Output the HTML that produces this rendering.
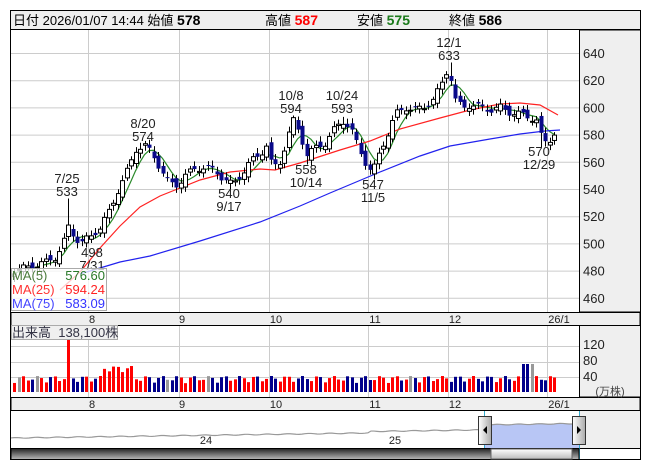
<!DOCTYPE html>
<html><head><meta charset="utf-8"><style>
body{margin:0;background:#fff;width:653px;height:470px;overflow:hidden;font-family:"Liberation Sans","Noto Sans CJK JP",sans-serif}
svg{position:absolute;left:0;top:0}
text{font-family:"Liberation Sans","Noto Sans CJK JP",sans-serif}
</style></head><body>
<svg id="s" width="653" height="470" xmlns="http://www.w3.org/2000/svg">
<rect x="10.5" y="10.5" width="630" height="449" fill="#fff" stroke="#000"/>
<rect x="11" y="11" width="629" height="18" fill="#efefef"/>
<line x1="10" y1="29.5" x2="641" y2="29.5" stroke="#000"/>
<rect x="579.5" y="30" width="61" height="282" fill="#efefef" stroke="#000"/>
<rect x="579.5" y="325" width="61" height="72" fill="#efefef" stroke="#000"/>
<rect x="11" y="312.5" width="629" height="13" fill="#efefef" stroke="#000"/>
<rect x="11" y="397.5" width="629" height="13" fill="#efefef" stroke="#000"/>
<rect x="579.5" y="410.5" width="61" height="38" fill="#efefef" stroke="#000"/>
<g id="grid" stroke="#ccc" stroke-width="1"></g>
<g id="nav"></g>
<g id="c"></g>
<g font-size="13">
<text x="13" y="25">日付 2026/01/07 14:44 始値 <tspan font-weight="bold" font-size="14">578</tspan></text>
<text x="265" y="25">高値 <tspan font-weight="bold" font-size="14" fill="#f00">587</tspan></text>
<text x="357" y="25">安値 <tspan font-weight="bold" font-size="14" fill="#1a7a1a">575</tspan></text>
<text x="449" y="25">終値 <tspan font-weight="bold" font-size="14">586</tspan></text>
</g>
<g font-size="13" fill="#222" id="yl"></g>
<g font-size="13" fill="#222" text-anchor="middle">
<text x="67" y="183">7/25</text><text x="67" y="196">533</text>
<text x="143" y="128">8/20</text><text x="143" y="141">574</text>
<text x="92" y="257">498</text><text x="92" y="270">7/31</text>
<text x="229" y="198">540</text><text x="229" y="211">9/17</text>
<text x="291" y="100">10/8</text><text x="291" y="113">594</text>
<text x="306" y="174">558</text><text x="306" y="187">10/14</text>
<text x="342" y="100">10/24</text><text x="342" y="113">593</text>
<text x="373" y="189">547</text><text x="373" y="202">11/5</text>
<text x="449" y="47">12/1</text><text x="449" y="60">633</text>
<text x="539" y="156">570</text><text x="539" y="169">12/29</text>
</g>
<g font-size="11" fill="#222" text-anchor="middle">
<text x="92" y="323">8</text><text x="182" y="323">9</text><text x="276" y="323">10</text><text x="375" y="323">11</text><text x="455" y="323">12</text><text x="559" y="323">26/1</text>
<text x="92" y="408">8</text><text x="182" y="408">9</text><text x="276" y="408">10</text><text x="375" y="408">11</text><text x="455" y="408">12</text><text x="559" y="408">26/1</text>
<text x="206" y="444">24</text><text x="395" y="444">25</text>
</g>
<g font-size="13" fill="#222">
<text x="583" y="349">120</text><text x="583" y="365">80</text><text x="583" y="381">40</text>
</g>
<text x="610" y="395" font-size="11" fill="#444" text-anchor="middle">(万株)</text>
<rect x="11.5" y="268.5" width="95" height="42" fill="#fff" fill-opacity="0.75" stroke="#aaa"/>
<g font-size="13">
<text x="12" y="280" fill="#4a7a3a">MA(5)</text><text x="105" y="280" fill="#2a7a2a" text-anchor="end">576.60</text>
<text x="12" y="294" fill="#f33">MA(25)</text><text x="105" y="294" fill="#f22" text-anchor="end">594.24</text>
<text x="12" y="308" fill="#44f">MA(75)</text><text x="105" y="308" fill="#33f" text-anchor="end">583.09</text>
</g>
<rect x="11.5" y="325.5" width="106" height="14" fill="#efefef" stroke="#aaa"/>
<text x="12" y="337" font-size="13" fill="#334">出来高 &#160;138,100株</text>
</svg>
<script>
var s='http://www.w3.org/2000/svg';
function el(p,t,a){var e=document.createElementNS(s,t);for(var k in a)e.setAttribute(k,a[k]);p.appendChild(e);return e;}
var g=document.getElementById('grid'),c=document.getElementById('c'),yl=document.getElementById('yl'),nav=document.getElementById('nav');
function Y(p){return 53+(640-p)*1.36;}
for(var p=460;p<=640;p+=20){el(g,'line',{x1:11,x2:579,y1:Y(p)+.5,y2:Y(p)+.5});var t=el(yl,'text',{x:583,y:Y(p)+5});t.textContent=p;}
[346,362,377].forEach(function(y){el(g,'line',{x1:11,x2:579,y1:y+.5,y2:y+.5});});
[88,179,269,368,448,547].forEach(function(x){el(g,'line',{x1:x+.5,x2:x+.5,y1:30,y2:312});el(g,'line',{x1:x+.5,x2:x+.5,y1:326,y2:397});});
var kp=[[14,480],[30,483],[45,486],[55,490],[62,498],[68,512],[74,505],[80,500],[90,505],[100,512],[110,525],[118,540],[128,555],[136,570],[145,572],[152,565],[160,555],[168,545],[175,542],[185,550],[195,555],[205,556],[215,553],[222,548],[232,543],[240,550],[250,560],[260,566],[266,572],[272,555],[280,560],[288,580],[293,590],[300,580],[306,565],[315,570],[325,574],[335,585],[343,590],[350,585],[358,570],[366,558],[372,552],[380,568],[388,582],[395,595],[405,600],[415,598],[423,600],[432,605],[440,615],[448,630],[455,605],[462,600],[470,602],[480,600],[490,598],[500,600],[510,596],[520,595],[532,592],[537,590],[542,574],[548,575],[553,580],[558,586]];
function interp(x){for(var i=1;i<kp.length;i++){if(x<=kp[i][0]){var a=kp[i-1],b=kp[i];return a[1]+(b[1]-a[1])*(x-a[0])/(b[0]-a[0]);}}return kp[kp.length-1][1];}
var xs=[],cl=[];for(var x=14;x<=558;x+=4.5){xs.push(x);cl.push(interp(x)+Math.sin(x*1.7)*2.5);}
var ma=[];for(var i=0;i<cl.length;i++){var sum=0,n=0;for(var j=Math.max(0,i-4);j<=i;j++){sum+=cl[j];n++;}ma.push(sum/n);}
function poly(pts,col){el(c,'polyline',{points:pts.map(function(q){return q[0]+','+q[1];}).join(' '),fill:'none',stroke:col,'stroke-width':1.2});}
poly(xs.map(function(x,i){return [x,Y(ma[i])];}),'#2a8a2a');
poly([[60,290],[80,272],[100,248],[120,226],[140,207],[160,196],[180,188],[200,180],[230,172],[260,169],[275,170],[300,163],[340,150],[370,141],[400,129],[440,118],[470,110],[500,104],[520,103],[540,105],[558,115]],'#f22');
poly([[80,274],[120,262],[150,256],[200,241],[260,222],[300,206],[330,193],[380,172],[420,156],[450,146],[490,139],[520,134],[545,131],[560,130]],'#22e');
function near(x){var b=0;for(var i=0;i<xs.length;i++)if(Math.abs(xs[i]-x)<Math.abs(xs[b]-x))b=i;return b;}
var HI={},LO={};[[68,533],[139,574],[293,594],[343,593],[449,633]].forEach(function(q){HI[near(q[0])]=q[1];});
[[80,498],[230,540],[305,558],[372,547],[540,570]].forEach(function(q){LO[near(q[0])]=q[1];});
for(var i=0;i<xs.length;i++){var x=xs[i],cv=cl[i],o=i?cl[i-1]+Math.cos(x)*3:cv-2;var up=cv>=o;
var h=Math.max(o,cv)+2+Math.abs(Math.sin(x*3))*2,l=Math.min(o,cv)-2-Math.abs(Math.cos(x*2))*2;
if(HI[i])h=HI[i];if(LO[i])l=LO[i];
var xr=Math.round(x);
el(c,'line',{x1:xr+.5,x2:xr+.5,y1:Y(h),y2:Y(l),stroke:'#000','stroke-width':1});
var t=Y(Math.max(o,cv)),b=Y(Math.min(o,cv));if(b-t<1)b=t+1;
el(c,'rect',{x:xr-1.5,y:t,width:4,height:b-t,fill:up?'#fff':'#0a0a8a',stroke:up?'#000':'#0a0a8a','stroke-width':up?1:0});
var v=22+Math.abs(Math.sin(x*0.9))*18;if(Math.abs(x-68)<3)v=138;if(x>100&&x<135)v+=25;if(x>520&&x<535)v=70;
var vc=Math.abs(cv-o)<0.6?'#999':(up?'#f00':'#00008b');
el(c,'rect',{x:xr-1,y:392-v*0.4,width:3,height:v*0.4,fill:vc});}
// navigator
var np=[];for(var x=11;x<=579;x+=3){var y=438-(x-11)/568*8+Math.sin(x*0.3)*0.4;if(x>370)y-=1.5;if(x>484)y-=5;np.push([x,y]);}
var sel=np.filter(function(q){return q[0]>=484;});
el(nav,'polygon',{points:'484,448 '+sel.map(function(q){return q[0]+','+q[1];}).join(' ')+' 579,448',fill:'#b8c6f5'});
el(nav,'polyline',{points:np.map(function(q){return q[0]+','+q[1];}).join(' '),fill:'none',stroke:'#999','stroke-width':1.2});
el(nav,'line',{x1:484.5,x2:484.5,y1:411,y2:459,stroke:'#3ac'});el(nav,'line',{x1:579.5,x2:579.5,y1:411,y2:459,stroke:'#3ac'});
var lg=el(nav,'linearGradient',{id:'sb',x1:0,y1:0,x2:0,y2:1});el(lg,'stop',{offset:0,'stop-color':'#222'});el(lg,'stop',{offset:1,'stop-color':'#bbb'});
var lg2=el(nav,'linearGradient',{id:'th',x1:0,y1:0,x2:0,y2:1});el(lg2,'stop',{offset:0,'stop-color':'#fff'});el(lg2,'stop',{offset:1,'stop-color':'#bbb'});
var lg3=el(nav,'linearGradient',{id:'hd',x1:0,y1:0,x2:1,y2:0});el(lg3,'stop',{offset:0,'stop-color':'#fff'});el(lg3,'stop',{offset:1,'stop-color':'#aaa'});
el(nav,'rect',{x:11,y:448.5,width:568,height:11,fill:'url(#sb)',stroke:'#000'});
el(nav,'rect',{x:491,y:449,width:81,height:10,fill:'url(#th)',stroke:'#666'});
el(nav,'rect',{x:478.5,y:416.5,width:13,height:28,fill:'url(#hd)',stroke:'#333'});
el(nav,'rect',{x:572.5,y:416.5,width:13,height:28,fill:'url(#hd)',stroke:'#333'});
el(nav,'polygon',{points:'483,430 487,426 487,434',fill:'#000'});
el(nav,'polygon',{points:'581,430 577,426 577,434',fill:'#000'});
</script>
</body></html>
